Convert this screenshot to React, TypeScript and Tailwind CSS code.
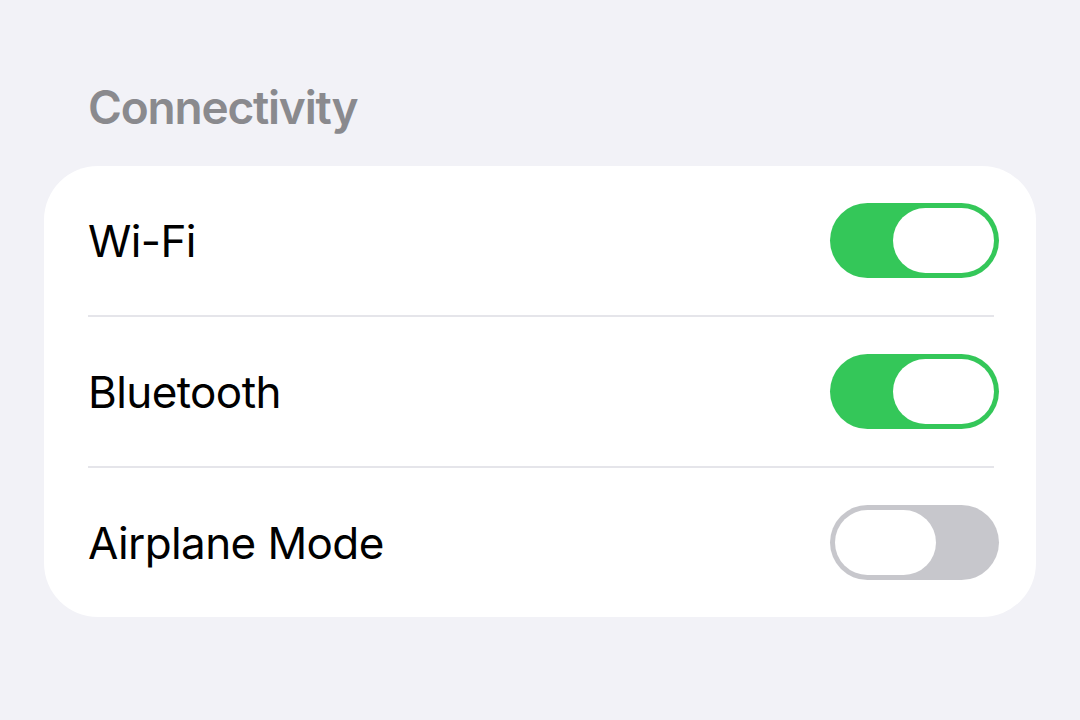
import React from "react";

function Toggle({ on }: { on: boolean }) {
  return (
    <div
      className={
        "flex h-[75px] w-[169px] items-center rounded-full p-[5px] " +
        (on ? "justify-end bg-[#34c759]" : "justify-start bg-[#c7c7cc]")
      }
    >
      <div className="h-[65px] w-[101px] rounded-full bg-white" />
    </div>
  );
}

function Row({ label, on, last }: { label: string; on: boolean; last?: boolean }) {
  return (
    <div className="flex flex-col">
      <div className="flex h-[149px] items-center justify-between pl-[44px] pr-[37px]">
        <span className="text-[44px] leading-none tracking-[-0.6px] text-black">{label}</span>
        <Toggle on={on} />
      </div>
      {!last && <div className="ml-[44px] mr-[42px] h-[2px] bg-[#e5e5ea]" />}
    </div>
  );
}

export default function App() {
  return (
    <div
      className="flex h-[720px] w-[1080px] flex-col bg-[#f2f2f7] px-[44px] pt-[84px]"
      style={{ fontFamily: "Inter, 'Noto Sans', sans-serif" }}
    >
      <div className="pl-[44px] text-[46px] font-semibold leading-none tracking-[-1.2px] text-[#8a8a8e]">
        Connectivity
      </div>
      <div className="mt-[36px] flex flex-col rounded-[54px] bg-white">
        <Row label="Wi-Fi" on />
        <Row label="Bluetooth" on />
        <Row label="Airplane Mode" on={false} last />
      </div>
    </div>
  );
}
